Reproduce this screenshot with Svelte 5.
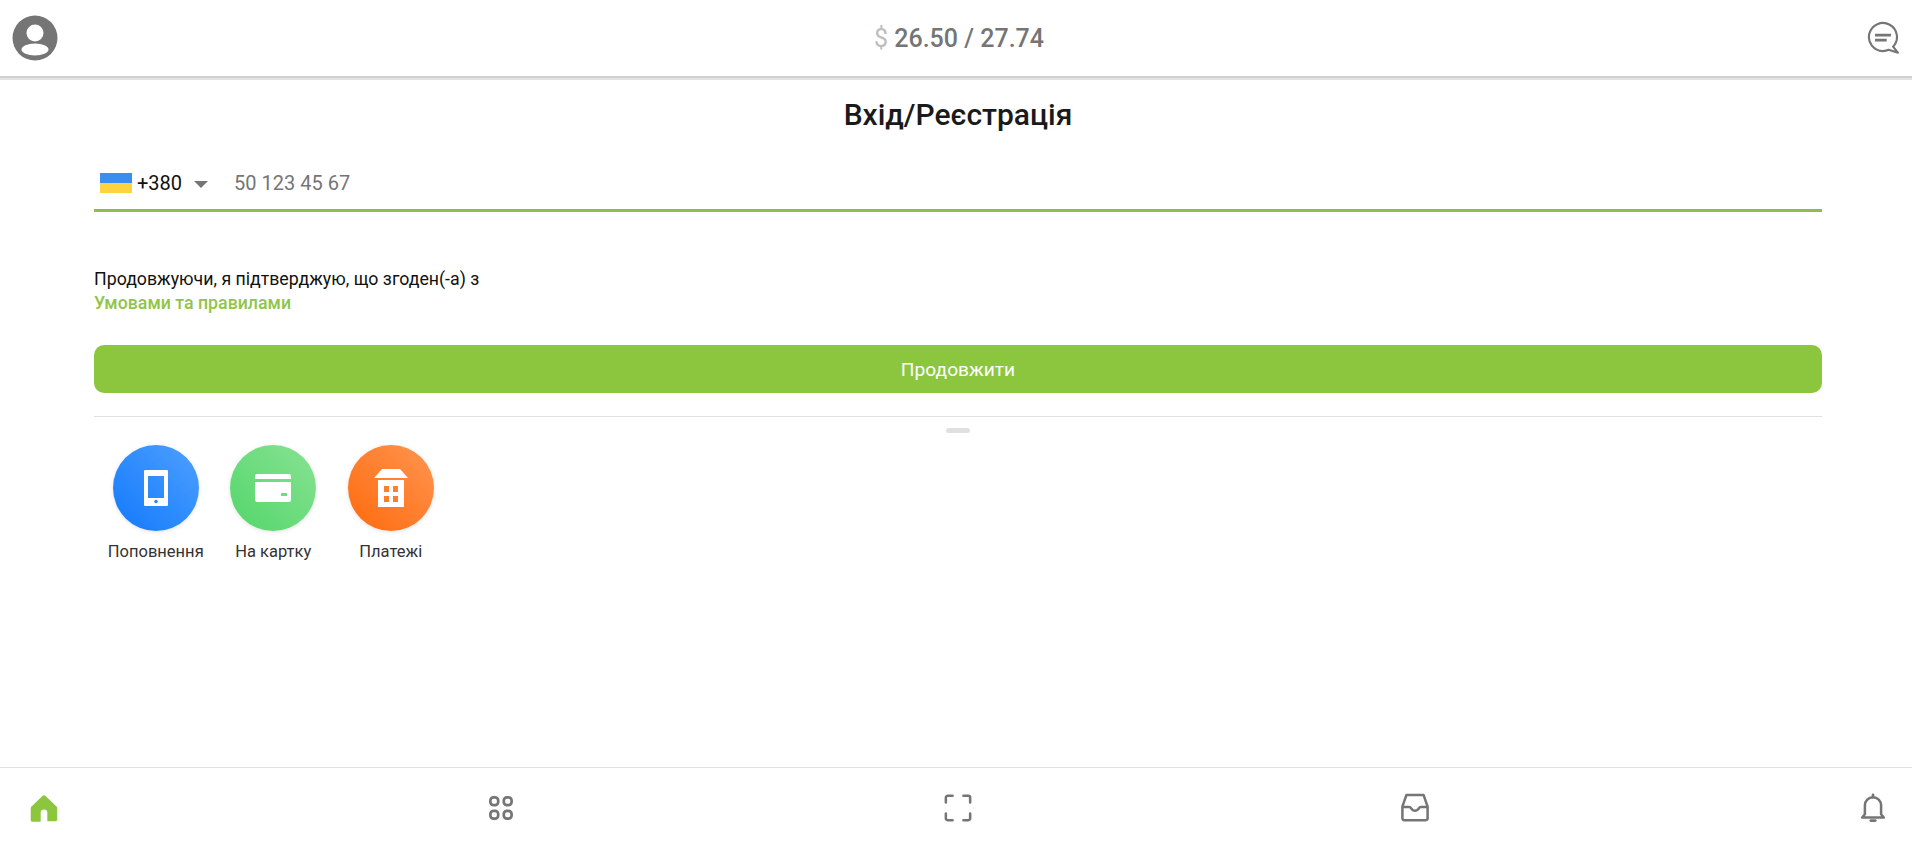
<script>
	let phone = $state('');

	const actions = [
		{ label: 'Поповнення', kind: 'blue' },
		{ label: 'На картку', kind: 'green' },
		{ label: 'Платежі', kind: 'orange' }
	];
</script>

<div class="page">
	<header class="topbar">
		<svg class="avatar" viewBox="0 0 46 46" width="46" height="46">
			<circle cx="23" cy="23" r="22.5" fill="#757575" />
			<circle cx="23" cy="18" r="8.5" fill="#fff" />
			<ellipse cx="23" cy="34.500" rx="13.5" ry="6" fill="#fff" />
		</svg>
		<div class="balance"><span class="currency">$</span> 26.50 / 27.74</div>
		<svg class="chat" viewBox="0 0 32 32" width="34" height="34" fill="none" stroke="#757575">
			<path d="M25.5 24.2A13.2 13.2 0 1 0 16 28.3c2 0 3.7-.4 5.3-1.2l8.7 2.8z" stroke-width="2" stroke-linejoin="round" />
			<path d="M8.5 13.2h15M8.5 18h11" stroke-width="2.6" />
		</svg>
	</header>

	<main class="content">
		<h1>Вхід/Реєстрація</h1>

		<div class="phone-row">
			<span class="flag"></span>
			<span class="code">+380</span>
			<span class="caret"></span>
			<input bind:value={phone} placeholder="50 123 45 67" />
		</div>

		<p class="terms">Продовжуючи, я підтверджую, що згоден(-а) з<br /><a href="#terms">Умовами та правилами</a></p>

		<button class="continue">Продовжити</button>

		<div class="divider"><span class="handle"></span></div>

		<div class="actions">
			{#each actions as action}
				<div class="action">
					<div class="circle {action.kind}">
						{#if action.kind === 'blue'}
							<svg viewBox="0 0 24 36" width="24" height="36">
								<path fill-rule="evenodd" fill="#fff" d="M1 0h22a1 1 0 0 1 1 1v34a1 1 0 0 1-1 1H1a1 1 0 0 1-1-1V1a1 1 0 0 1 1-1zM4 6v22h16V6z" />
								<circle cx="12" cy="31.5" r="1.7" fill="#2783f5" />
							</svg>
						{:else if action.kind === 'green'}
							<svg viewBox="0 0 36 28" width="36" height="28">
								<path fill="#fff" d="M2 0h32a2 2 0 0 1 2 2v3H0V2a2 2 0 0 1 2-2z" />
								<path fill="#fff" fill-rule="evenodd" d="M0 8h36v18a2 2 0 0 1-2 2H2a2 2 0 0 1-2-2zM26 19v3h6v-3z" />
							</svg>
						{:else}
							<svg viewBox="0 0 34 38" width="34" height="38">
								<path fill="#fff" d="M8 0h18l8 9H0z" />
								<path fill="#fff" fill-rule="evenodd" d="M4 11h26v27H4zM10 17v6h5v-6zM19 17v6h5v-6zM10 27v6h5v-6zM19 27v6h5v-6z" />
							</svg>
						{/if}
					</div>
					<span class="label">{action.label}</span>
				</div>
			{/each}
		</div>
	</main>

	<nav class="bottombar">
		<svg viewBox="1 1 38 38" width="36" height="36">
			<path fill="#8cc63f" d="M20 6.5a2 2 0 0 1 1.4.6l11.8 11.2c.5.5.8 1.100.8 1.800v12.400a1.500 1.500 0 0 1-1.500 1.500H23.500V25a3.500 3.500 0 0 0-7 0v9.500H7.500A1.500 1.500 0 0 1 6 33V20.100c0-.700.300-1.300.800-1.800L18.600 7.100a2 2 0 0 1 1.400-.6z" />
		</svg>
		<svg viewBox="0 0 40 40" width="36" height="36" fill="none" stroke="#757575" stroke-width="3">
			<rect x="8.200" y="8.200" width="8.700" height="8.700" rx="3.500" />
			<rect x="23.100" y="8.200" width="8.700" height="8.700" rx="3.500" />
			<rect x="8.200" y="23.100" width="8.700" height="8.700" rx="3.500" />
			<rect x="23.100" y="23.100" width="8.700" height="8.700" rx="3.500" />
		</svg>
		<svg viewBox="0 0 40 40" width="36" height="36" fill="none" stroke="#757575" stroke-width="2.800" stroke-linecap="round">
			<path d="M6.500 14V8.500a2 2 0 0 1 2-2H14M26 6.500h5.500a2 2 0 0 1 2 2V14M6.500 26v5.500a2 2 0 0 0 2 2H14M33.500 26v5.500a2 2 0 0 1-2 2H26" />
		</svg>
		<svg viewBox="0 0 40 40" width="36" height="36" fill="none" stroke="#757575" stroke-width="2.800" stroke-linejoin="round">
			<path d="M10.500 5.500h19l4.500 13v13a2 2 0 0 1-2 2H8a2 2 0 0 1-2-2v-13z" />
			<path d="M6 19h7.500c1.500 0 2 1 3 2.300.8 1 2 1.700 3.500 1.700s2.700-.7 3.500-1.700c1-1.300 1.500-2.300 3-2.300H34" />
		</svg>
		<svg viewBox="0 0 40 40" width="36" height="36" fill="none" stroke="#757575" stroke-width="2.800" stroke-linejoin="round">
			<path d="M11 27V17a9 9 0 0 1 18 0V27l3 3.500H8z" />
			<path d="M20 8V5.500" stroke-linecap="round" stroke-width="3" />
			<path d="M17.500 34h5" stroke-linecap="round" stroke-width="3" />
		</svg>
	</nav>
</div>

<style>
	:global(body) {
		margin: 0;
		background: #fff;
		font-family: Roboto, 'Noto Sans', sans-serif;
	}

	.page {
		height: 844px;
		display: flex;
		flex-direction: column;
		overflow: hidden;
	}

	.topbar {
		flex: none;
		height: 76px;
		padding: 0 12px;
		box-sizing: content-box;
		display: flex;
		align-items: center;
		justify-content: space-between;
		border-bottom: 2px solid #d0d0d0;
		box-shadow: 0 2px 0 #e4e4e4;
	}

	.balance {
		font-size: 25px;
		font-weight: 500;
		color: #757575;
		margin-left: -6px;
	}

	.currency {
		color: #bdbdbd;
		font-weight: 400;
	}

	.content {
		flex: 1;
		padding: 0 90px 0 94px;
	}

	h1 {
		margin: 16px 0 0;
		text-align: center;
		font-size: 30px;
		line-height: 42px;
		font-weight: 500;
		color: #1a1a1a;
	}

	.phone-row {
		margin-top: 20px;
		height: 53px;
		padding: 0 6px;
		display: flex;
		align-items: center;
		border-bottom: 3px solid #8fbc4b;
	}

	.flag {
		width: 32px;
		height: 20px;
		background: linear-gradient(#3b8df0 50%, #fdd43f 50%);
	}

	.code {
		margin-left: 5px;
		font-size: 20px;
		color: #111;
	}

	.caret {
		margin: 3px 0 0 12px;
		border-left: 7.5px solid transparent;
		border-right: 7.5px solid transparent;
		border-top: 7.5px solid #757575;
	}

	input {
		margin-left: 26px;
		flex: 1;
		border: 0;
		outline: 0;
		padding: 0;
		font: 20px Roboto, sans-serif;
		color: #111;
	}

	input::placeholder {
		color: #757575;
		opacity: 1;
	}

	.terms {
		margin: 55px 0 0;
		font-size: 17.75px;
		line-height: 24px;
		color: #111;
	}

	.terms a {
		color: #8fc54a;
		font-weight: 500;
		text-decoration: none;
	}

	.continue {
		display: block;
		width: 100%;
		height: 48px;
		margin-top: 30px;
		border: 0;
		border-radius: 10px;
		background: #8cc63f;
		color: #fff;
		font: 19.2px Roboto, sans-serif;
	}

	.divider {
		margin-top: 23px;
		height: 12px;
		border-top: 1px solid #e0e0e0;
		position: relative;
	}

	.handle {
		position: absolute;
		left: 50%;
		top: 11px;
		margin-left: -12px;
		width: 24px;
		height: 5px;
		border-radius: 3px;
		background: #e0e0e0;
	}

	.actions {
		margin-top: 16px;
		margin-left: 3px;
		display: flex;
	}

	.action {
		width: 117.5px;
		display: flex;
		flex-direction: column;
		align-items: center;
	}

	.circle {
		width: 86px;
		height: 86px;
		border-radius: 50%;
		display: flex;
		align-items: center;
		justify-content: center;
		box-shadow: 0 1px 4px rgba(0, 0, 0, 0.12);
	}

	.blue {
		background: linear-gradient(45deg, #1279fb, #4ea0ff);
	}

	.green {
		background: linear-gradient(45deg, #53d66a, #88e293);
	}

	.orange {
		background: linear-gradient(45deg, #ff6a0d, #ff9550);
	}

	.label {
		margin-top: 10px;
		font-size: 16.5px;
		line-height: 22px;
		color: #333;
		white-space: nowrap;
	}

	.bottombar {
		flex: none;
		height: 77px;
		box-sizing: border-box;
		padding: 4px 21.5px 0 25.5px;
		display: flex;
		align-items: center;
		justify-content: space-between;
		border-top: 1px solid #e0e0e0;
	}
</style>
